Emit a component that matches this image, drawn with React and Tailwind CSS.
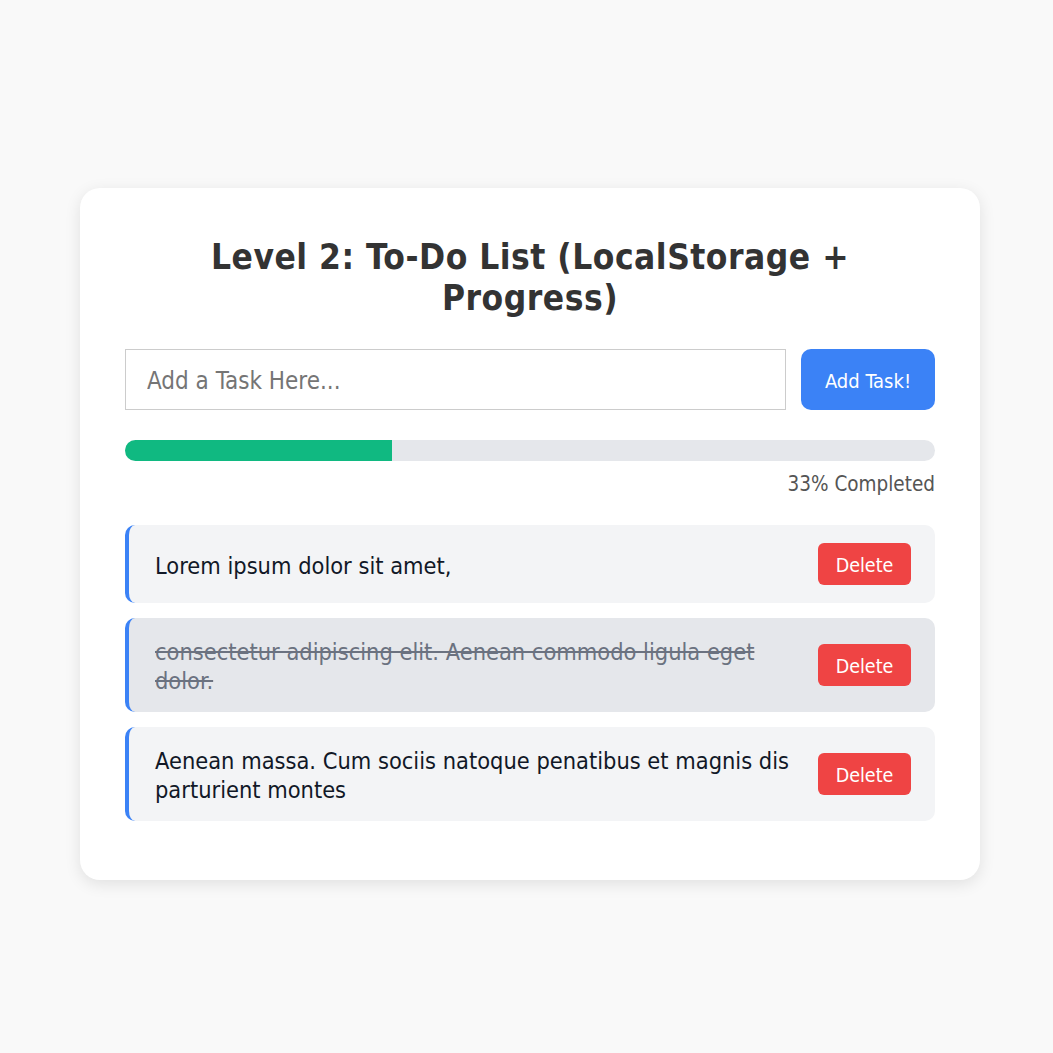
export default function App() {
  const tasks = [
    { text: "Lorem ipsum dolor sit amet,", done: false },
    { text: "consectetur adipiscing elit. Aenean commodo ligula eget dolor.", done: true },
    { text: "Aenean massa. Cum sociis natoque penatibus et magnis dis parturient montes", done: false },
  ];
  const font = { fontFamily: '"DejaVu Sans Condensed", "DejaVu Sans", sans-serif' };
  return (
    <div className="min-h-[1053px] bg-[#f9f9f9] flex justify-start pl-[80px] pt-[188px]" style={font}>
      <div className="w-[900px] h-fit bg-white rounded-[20px] shadow-[0_4px_16px_rgba(0,0,0,0.1)] px-[45px] pt-[49px] pb-[59px]">
        <h1 className="text-[35px] leading-[41px] tracking-[0.5px] font-bold text-[#333] text-center px-[60px]">
          Level 2: To-Do List (LocalStorage + Progress)
        </h1>
        <div className="flex gap-[15px] mt-[30px]">
          <input
            className="flex-1 h-[61px] border border-[#ccc] px-[21px] pt-[3px] text-[24px] text-[#333] placeholder:text-[#757575] outline-none"
            placeholder="Add a Task Here..."
            style={font}
          />
          <button
            className="w-[134px] h-[61px] pt-[3px] bg-[#3b82f6] text-white text-[20px] rounded-[10px]"
            style={font}
          >
            Add Task!
          </button>
        </div>
        <div className="mt-[30px] h-[21px] bg-[#e5e7eb] rounded-full overflow-hidden">
          <div className="h-full bg-[#10b981]" style={{ width: "33%" }} />
        </div>
        <div className="text-right text-[20.5px] leading-[25px] text-[#555] mt-[11px]">33% Completed</div>
        <div className="mt-[28px] flex flex-col gap-[15px]">
          {tasks.map((t, i) => (
            <div
              key={i}
              className={`flex items-center justify-between gap-[24px] rounded-[10px] border-l-4 border-[#3b82f6] py-[18px] pl-[26px] pr-[24px] ${
                t.done ? "bg-[#e5e7eb]" : "bg-[#f3f4f6]"
              }`}
            >
              <span
                className={`text-[23.4px] leading-[29px] translate-y-[2px] ${
                  t.done ? "line-through text-[#6b7280]" : "text-[#111827]"
                }`}
              >
                {t.text}
              </span>
              <button
                className="shrink-0 w-[93px] h-[42px] pt-[3px] bg-[#ef4444] text-white text-[19.5px] rounded-[6px]"
                style={font}
              >
                Delete
              </button>
            </div>
          ))}
        </div>
      </div>
    </div>
  );
}
